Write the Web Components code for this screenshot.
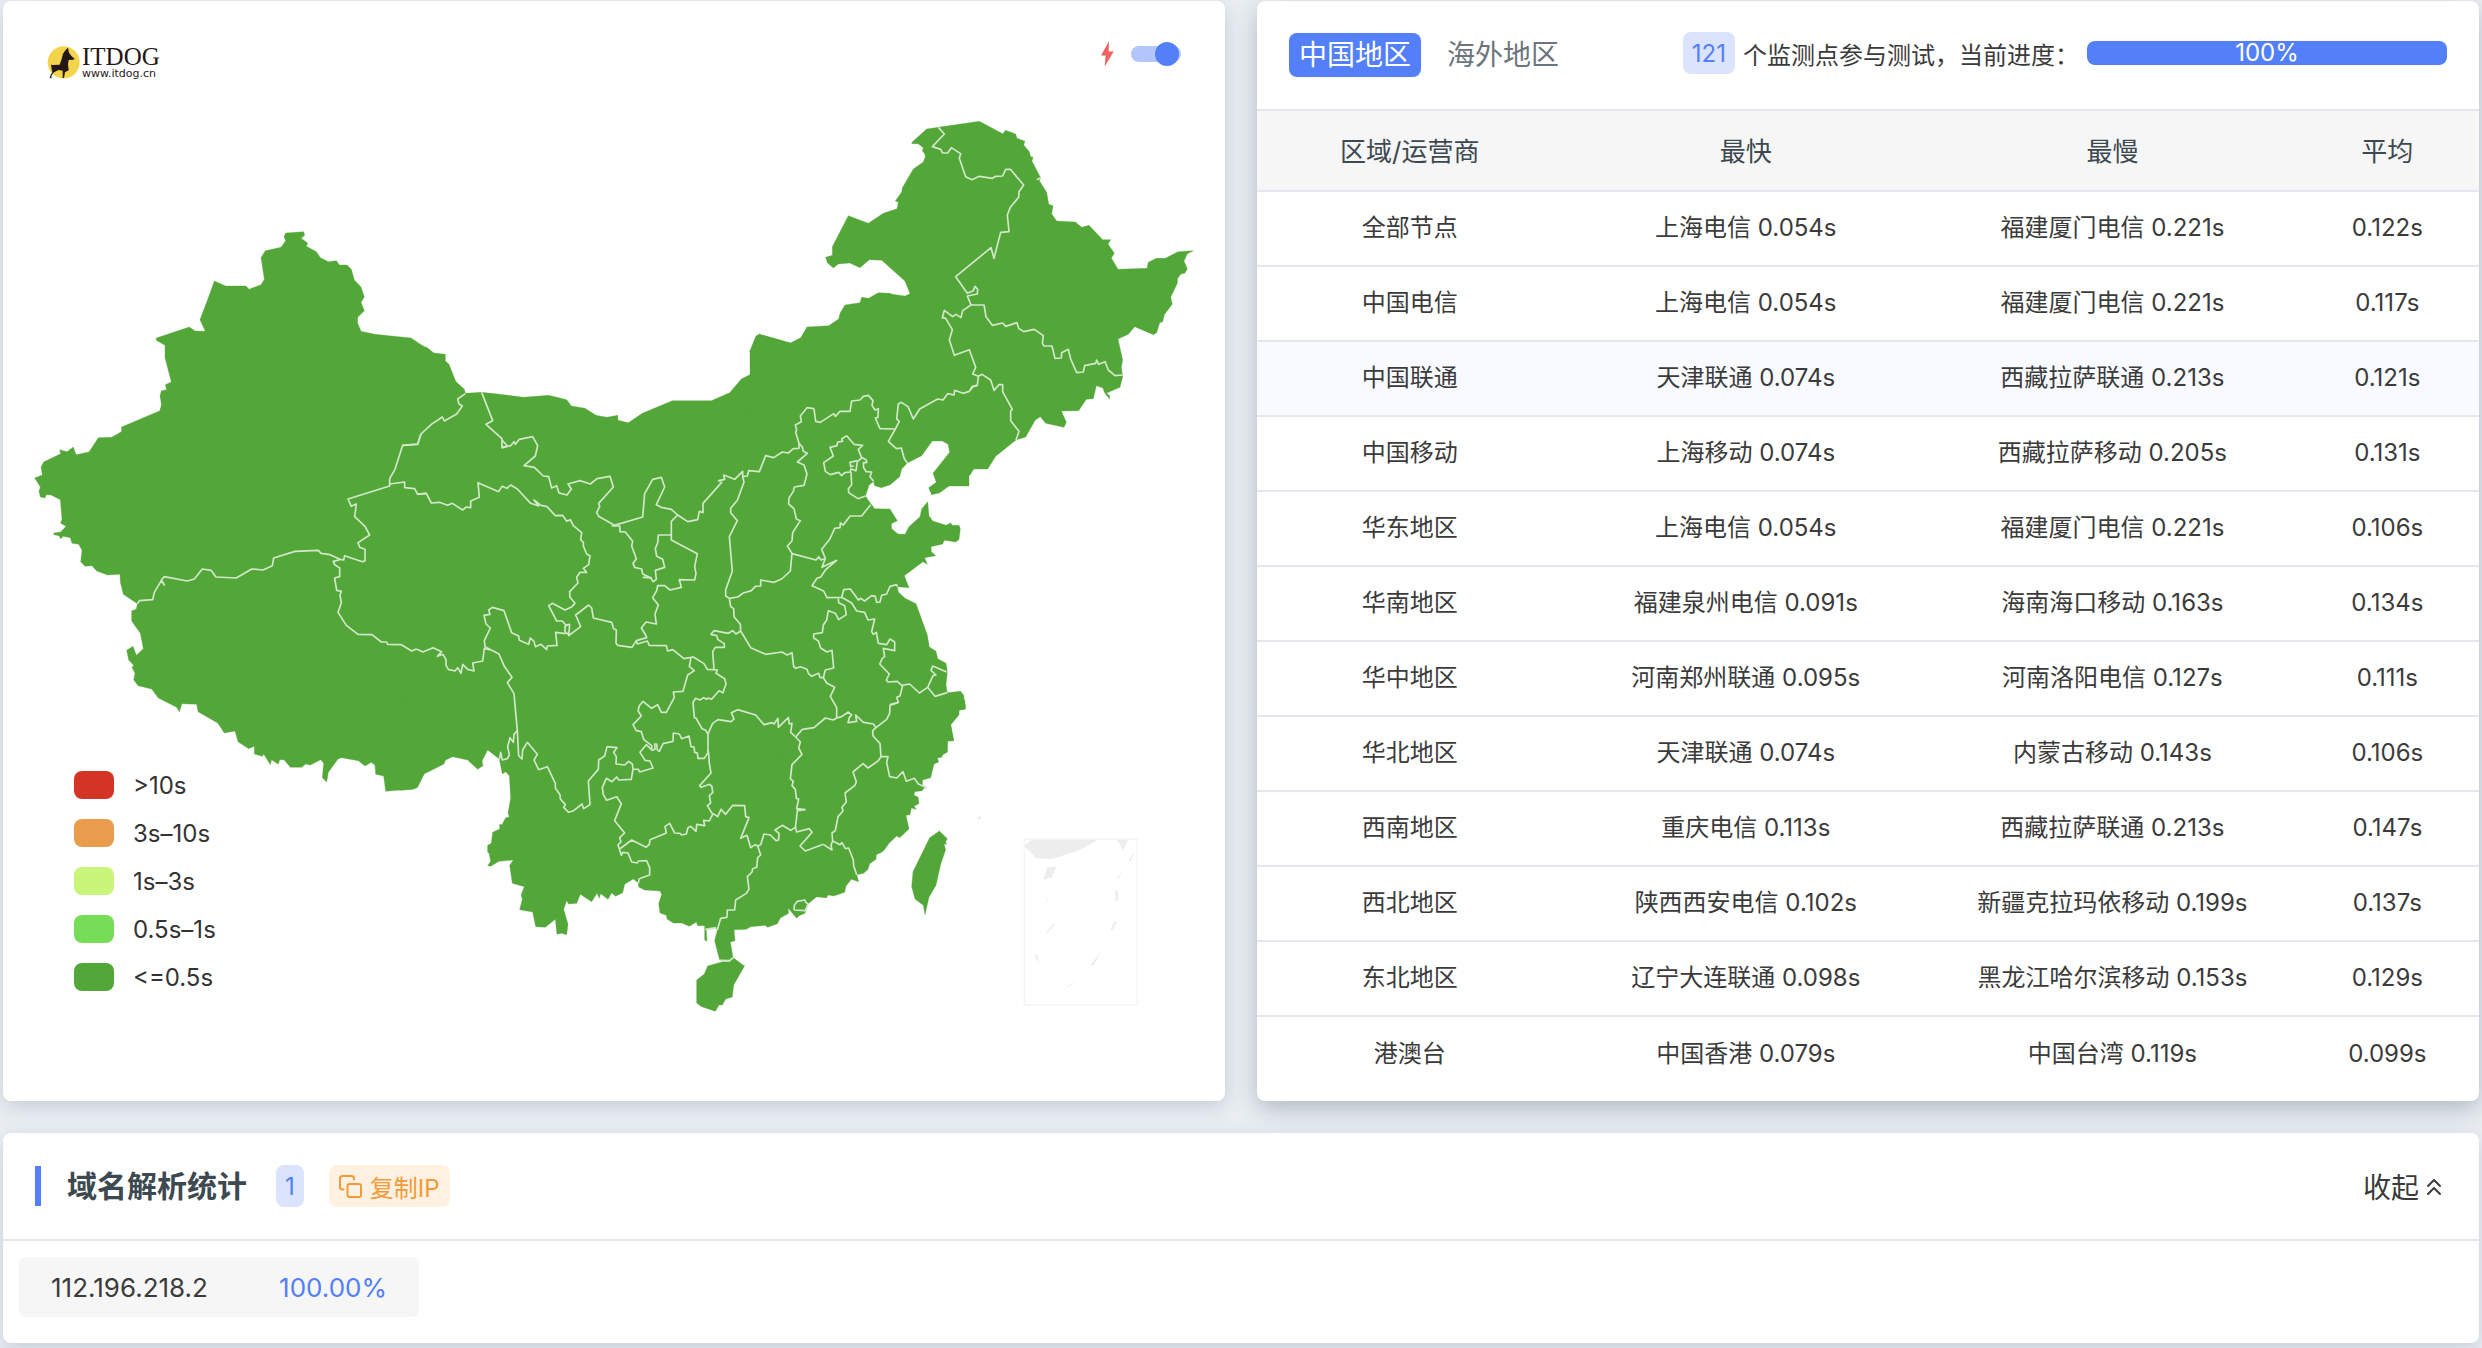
<!DOCTYPE html>
<html lang="zh-CN">
<head>
<meta charset="utf-8">
<title>ITDOG</title>
<style>
  html { background: #ebeff4; }
  body { margin: 0; font-family: Inter, "Noto Sans CJK SC", sans-serif; font-size: 24px; color: #3b3b3b; }
</style>
</head>
<body>
<speed-page></speed-page>
<script>
/* Each layer: origin x, origin y, then point lists on a grid of 1/3 px. */
const LAND = [
  [0, 0, "1290,1400 500,1400 480,1232 485,1215 480,1188 484,1172 500,1169 496,1154 514,1146 495,1073 495,1036 469,1021 469,1014 568,981 585,993 616,994 600,959 625,893 643,843 677,858 738,858 747,868 783,854 793,838 783,773 796,752 843,742 857,722 852,710 857,699 911,695 914,706 903,715 923,729 919,739 949,755 961,773 985,785 1009,782 1018,795 1041,795 1054,808 1063,840 1083,861 1093,891 1083,907 1093,932 1073,952 1073,970 1083,994 1125,1003 1233,1014 1260,1032 1290,1050"],
  [0, 1200, "484,0 485,15 480,32 365,81 364,95 335,112 295,113 267,156 228,164 220,141 201,155 179,149 182,161 131,186 123,201 127,225 104,234 121,261 117,274 121,291 135,294 139,284 153,285 181,299 186,357 182,370 198,379 182,396 161,399 162,404 177,407 182,416 190,409 211,413 216,430 236,433 246,451 242,485 255,499 276,497 290,513 323,525 360,523 361,547 370,583 412,611 409,628 395,632 395,663 421,700 430,746 409,766 399,739 380,751 386,780 401,796 396,802 405,820 401,839 414,857 455,867 475,894 530,922 538,935 546,911 590,913 594,935 653,969 673,999 705,993 714,1025 746,1046 763,1039 763,1062 787,1069 791,1062 811,1094 815,1079 835,1093 839,1079 852,1079 871,1102 905,1102 917,1092 931,1095 962,1079 971,1090 967,1133 980,1146 985,1117 1014,1077 1025,1073 1075,1082 1095,1098 1114,1087 1125,1096 1127,1123 1151,1128 1157,1174 1240,1167 1252,1162 1272,1122 1290,1000 1290,0"],
  [1200, 1050, "0,0 80,-8 90,0 102,9 136,13 136,33 147,43 167,94 193,118 196,130 245,127 300,133 370,142 446,136 500,149 514,168 555,175 588,196 620,202 653,196 654,211 685,218 727,190 817,152 934,152 989,128 1024,87 1079,59 1078,46 1049,5 1068,-41 1078,-47 1171,-21 1300,100 1300,1260 340,1150 0,1100"],
  [1200, 2100, "0,0 0,271 38,268 52,262 72,222 132,192 136,181 158,170 203,180 233,208 249,197 246,183 263,150 298,177 307,222 317,215 328,227 332,295 324,340 328,351 317,353 306,374 299,373 299,387 278,397 274,430 263,436 263,457 267,459 272,484 263,497 272,499 297,484 340,480 329,496 337,550 373,560 363,585 367,597 359,629 398,636 407,680 436,682 466,658 471,703 485,700 500,704 504,673 491,628 500,602 506,612 530,610 541,583 575,605 591,580 598,595 602,581 624,598 635,579 647,589 668,578 674,553 700,537 715,549 716,561 734,570 780,573 785,583 776,611 780,639 799,646 801,657 820,669 845,669 868,679 889,666 893,677 914,677 914,720 921,724 919,689 948,683 952,690 944,723 959,780 989,782 999,772 991,726 1005,722 1002,689 1039,688 1052,680 1095,676 1103,682 1132,671 1141,654 1166,640 1164,624 1171,632 1190,655 1197,647 1215,640 1224,612 1250,590 1280,592 1284,585 1300,585 1320,580 1320,0", "1001,774 1030,796 1034,797 1001,855 997,891 977,897 967,915 957,915 946,934 905,920 890,909 890,840 913,822 923,798 968,785 989,785"],
  [2040, 2100, "300,0 300,590 411,590 439,593 444,584 461,588 494,577 498,558 514,538 536,545 530,524 551,520 564,508 569,491 588,478 589,464 605,457 613,450 627,430 650,408 659,413 687,387 678,346 690,344 694,324 709,328 702,318 717,311 714,291 702,286 704,275 727,272 732,264 740,263 727,255 728,240 752,233 762,192 776,186 772,174 785,172 789,163 801,157 803,123 821,122 812,74 837,44 837,30 857,27 854,0", "749,413 778,393 802,416 797,425 799,433 792,432 797,449 782,493 768,556 747,592 735,644 730,616 705,597 695,560 699,515"],
  [2100, 1140, "948,50 948,180 887,229 863,267 822,267 807,289 807,318 747,318 718,339 695,344 686,323 709,307 699,280 749,217 744,193 727,183 697,183 665,227 622,249 605,267 599,290 571,314 544,323 524,317 520,305 508,314 496,348 513,372 524,386 570,387 592,422 574,431 575,446 594,462 615,463 627,440 660,410 665,387 683,365 687,407 698,423 738,436 752,429 757,436 777,436 781,446 777,478 768,486 733,481 728,492 693,500 694,515 707,527 674,533 682,553 669,545 613,587 627,623 592,620 595,636 615,655 648,671 682,765 688,801 708,814 713,836 738,850 742,875 738,915 742,938 782,934 791,946 796,987 777,991 776,1004 752,1034 761,1082 742,1083 742,1116 729,1123 0,1140 0,200 200,50"],
  [2340, 240, "-90,815 -72,769 -62,763 31,789 62,773 81,741 146,737 176,717 180,700 195,675 240,668 245,652 266,655 295,638 330,640 337,643 375,648 390,641 375,603 305,541 268,539 240,563 209,549 175,552 160,564 142,548 137,532 157,526 157,500 205,407 265,430 310,400 351,386 355,367 346,363 365,336 367,323 400,267 430,246 436,230 434,221 427,213 430,203 414,191 395,191 397,186 440,147 475,142 598,124 668,161 677,151 707,162 711,175 735,184 731,195 748,215 752,230 759,231 756,244 782,293 778,302 800,337 806,373 819,377 815,402 830,423 886,426 905,442 927,436 968,479 992,479 984,492 1003,520 994,534 1014,568 1101,565 1105,547 1129,535 1156,535 1194,515 1240,512 1222,521 1212,543 1222,567 1214,580 1203,582 1193,595 1192,610 1172,652 1177,672 1153,704 1148,725 1139,728 1130,758 1120,764 1064,740 1045,763 1014,777 1028,840 1024,862 1028,890 1020,922 980,939 989,947 989,958 973,937 969,924 949,917 940,956 919,958 896,992 844,993 859,1027 852,1042 797,1030 781,1010 766,1020 737,1071 708,1080 500,1000 0,1100 -90,1000"]
];
const BORDERS = [
  [0, 1200,
   "412,611 418,602 458,599 463,577 484,542 493,555 484,540 493,530 562,543 583,537 607,507 633,511 648,531 709,534 755,507 789,510 817,497 821,474 885,454 955,451 963,460 990,464 1024,479 1031,480 1034,467 1087,485 1095,483 1095,448 1079,442 1074,428 1109,405 1095,379 1064,350 1069,312 1054,319 1044,297 1169,258 1169,236 1185,208 1208,136 1253,132 1263,102",
   "1169,252 1214,246 1214,263 1244,266 1253,283 1279,280",
   "1020,479 1000,484 1004,494 1019,504 1019,530 1004,534 1010,571 1024,574 1020,585 1024,609 1014,637 1039,676 1074,703 1116,704 1144,726 1160,726 1163,733 1204,734 1235,753 1249,747"],
  [1200, 1050,
   "8,286 53,283 63,252 94,223 127,201 133,213 170,192 187,168 177,162 173,147 196,131",
   "53,432 79,430 94,459 118,457 143,466 157,460 188,480 199,471 212,473 212,453 238,442 234,398 296,425 306,409 321,415 332,405 352,417 392,460 416,468 402,450 423,466 441,470 466,497 488,496 500,514 511,509 520,527 545,548 542,569 550,577 550,588 560,612 570,617 566,644 550,655 560,667 540,667 530,682 534,699 509,725 510,742 525,760 516,770 495,780 457,760 446,767 470,813 487,813 497,825 509,823 506,857 542,830 527,795 566,765 575,774 580,804 635,817 641,836 649,840 648,880 653,886 696,892 709,872 740,863 737,855 724,834 738,816 769,822 765,792 775,765 758,743 770,722 773,707 794,707 810,720 844,712 838,689 884,690 888,670 884,650 892,611 814,570 814,555 775,555 773,579 766,595 770,619 788,628 794,652 766,661 769,688 760,695 750,682 730,682 754,684 728,672 725,657 704,652 699,640 709,627 695,587 698,574 676,546 660,545 659,528 635,528",
   "245,127 278,212 258,223 306,266 306,293 332,287 342,275 346,283 358,268 398,260 413,287 406,318 372,347 403,352 430,378 446,380 455,414 470,407 477,429 501,435 514,417 504,402 540,392 571,402 591,386 630,379 640,411 596,460 599,470 590,487 596,499 643,526 728,501 734,431 758,388 784,382 794,411 769,464 784,472 814,478 833,495 863,515 893,509 898,484 909,488 909,460 965,397 956,392 974,388 971,375 1004,388 1028,364 1028,380 1042,378 1046,362 1078,365 1097,317 1121,323 1147,306 1165,309 1180,296 1197,295 1197,280",
   "833,495 814,514 814,555", "306,270 322,288 306,293",
   "1028,380 1032,396 1012,451 992,475 992,488 1012,512 988,560 997,663 977,720 977,738 988,745 992,770 1001,776 1002,800 1021,823 1022,843 1052,893 1097,913 1146,906 1161,915 1176,908 1181,950 1190,956",
   "988,745 1013,741 1030,729 1054,722 1066,709 1082,708 1082,690 1122,697 1145,687 1171,663 1176,610 1162,588 1176,573 1178,548 1201,512 1189,507 1182,476 1166,462 1167,444 1180,424 1183,411 1212,406 1221,372 1212,345 1192,336 1222,310 1210,304 1207,291 1197,280 1187,247 1190,239 1186,225 1204,215 1201,198 1221,173 1242,176",
   "1022,843 1008,852 998,842 985,850 942,842 933,853 950,857 954,869 973,881 973,892 946,892 938,905 942,957",
   "709,872 712,882 742,873 748,886 799,887 803,903 818,899 852,926 880,921 912,941 922,958 952,960 948,970 974,986 978,1001 969,1028 957,1022 935,1048 925,1044 920,1048 911,1043 899,1050 887,1045 879,1057 883,1103 888,1104 906,1136 916,1140 924,1152",
   "755,1198 755,1187 731,1168 724,1145 709,1142 699,1124 724,1098 714,1082 718,1067 729,1054 755,1075 773,1064 784,1087 799,1087 823,1042 820,1026 849,1024 863,975 883,962 868,949 873,922",
   "497,851 467,847 471,886 442,888 440,899 423,883 406,890 402,874 391,864 386,883 358,871 356,858 335,848 312,782 277,772 266,780 270,793 252,796 258,822 271,834 253,872 255,890 297,912 313,949 336,982 322,998 342,1031 352,1142 356,1218",
   "509,857 495,845 495,830 504,823",
   "49,897 69,906 99,893 125,905 112,919 129,913 138,929 138,946 145,958 165,963 173,953 183,970 188,943 203,958 222,963 218,939 248,933 253,895 270,900",
   "352,1142 342,1153 340,1177 330,1163 323,1190 328,1215 322,1226 307,1230 302,1207 298,1228",
   "924,1152 938,1120 954,1109 993,1115 1002,1107 994,1088 1013,1079 1067,1095 1092,1124 1116,1118 1122,1122 1134,1105 1135,1132 1165,1103 1168,1122 1176,1120 1172,1147 1187,1161"],
  [1200, 2100,
   "356,168 366,177 368,150 382,127 412,163 402,180 416,209 442,200 466,250 466,264 480,284 481,297 496,314 491,322 506,337 521,332 546,312 551,326 570,314 565,243 595,208 596,180 614,168 621,140 651,143 641,157 649,170 648,192 674,195 686,184 697,192 699,207 715,208 719,216 759,204 750,183 735,181 720,157 739,134 757,151 765,148 764,132 770,132 772,150 778,154 789,131 819,124 820,99 838,102 845,116 867,108 873,140 882,141 884,157 892,159 894,175 913,175 924,158 924,102",
   "699,207 694,238 656,240 650,231 636,245 619,235 607,263 610,284 620,301 650,290 664,311 644,362 674,399 659,413 663,425 654,435 664,466 668,457 684,459 695,486 712,489 715,483 740,482 749,503 749,525 718,536 715,549",
   "659,447 695,420 738,442 748,433 750,419 799,399 795,379 809,370 824,399 840,400 845,405 859,402 864,383 872,379 888,394 890,373 914,377 911,361 928,363 938,343 922,317 932,309 928,287 938,278 936,260 929,253 903,262 899,257 933,219 928,190 926,160 924,152",
   "938,340 953,350 963,328 977,343 998,316 1034,317 1037,350 1047,353 1022,415 1041,406 1052,443 1066,434 1073,438 1082,434 1092,402 1111,405 1128,422 1136,420 1137,400 1125,390 1147,376 1172,391 1186,382 1190,396 1228,386 1236,397 1200,438 1216,453 1270,433",
   "1073,438 1082,465 1073,473 1070,502 1058,506 1056,516 1042,530 1047,567 1039,580 1007,600 1004,630 982,630 981,652 962,655 952,690",
   "1187,111 1201,126 1196,144 1206,163 1176,194 1171,236 1180,244 1176,257 1186,268 1189,295 1196,297 1190,326 1215,329 1192,332 1186,385",
   "959,781 989,782 999,773", "916,688 948,683",
   "1182,630 1183,616 1192,604 1215,600 1217,607 1224,612 1216,632 1182,630"],
  [2040, 2100,
   "347,111 367,88 402,83 436,54 460,60 470,54 485,50 505,36 515,45 508,53 504,68 530,64 527,45 550,67 580,72 588,83 578,92 579,108 600,130 603,170 594,183 564,204 549,191 519,216 529,245 525,256 495,279 499,306 486,322 489,333 474,350 466,392 456,399 458,423 453,435 456,450 430,433",
   "458,423 480,434 486,428 496,446 506,444 520,480 521,497 530,524",
   "588,83 620,58 629,40 630,16 654,8",
   "603,170 624,170 620,188 629,230 650,234 669,215 679,244 703,235 715,252 740,263"],
  [2100, 1140,
   "342,86 347,124 361,127 401,101 406,109 420,94 450,94 455,63 480,60 490,49 505,46 519,62 516,76 525,90 535,86 534,112 526,114 540,146 586,147 598,124 590,117 595,72 604,67 624,80 640,117 659,87 713,57 729,60 743,41 762,45 764,31 789,40 808,34 819,20 832,17",
   "586,147 565,184 589,206 604,204 613,236 622,249",
   "440,167 425,177 428,184 413,186 411,197 390,202 400,228 371,248 376,274 391,284 416,277 425,287 434,278 450,276 453,267 468,272 472,245 485,234 475,208 488,196 462,193 440,167",
   "485,232 499,240 500,248 490,248 491,263 499,275 515,276 510,290 521,304",
   "472,242 450,247 452,260 461,257",
   "453,276 455,314 445,326 446,338 474,356 496,348",
   "512,374 485,408 450,408 430,435 421,429 420,443 404,445 389,478 365,508 376,535 366,562 410,541 378,568 362,591 351,595 336,617 371,633 381,653 425,652 431,629 451,627 475,660 481,655 494,663 515,647 526,649 530,667 540,666 545,646 560,642 570,619 590,614 592,620",
   "276,521 348,540 356,530 363,540 374,536",
   "415,655 416,668 434,677 439,704 416,719 406,700 385,692 380,720 370,735 367,758 341,762 341,774 355,783 362,804 381,816 396,811 401,864 376,870 370,893 360,892 356,880 335,889 325,880 321,868 301,860 288,865 281,860",
   "370,893 380,909 404,922 391,949 410,983 410,1014",
   "425,652 455,669 470,693 494,697 504,720 524,717 515,755 520,763 529,757 535,790 560,794 570,777 584,786 584,812 550,805 554,830 547,835 539,852 568,882 559,900 564,906 592,904 605,916 629,912 658,939 683,922 699,887 708,885 693,871 698,858 740,876",
   "683,922 705,949 742,938", "608,916 600,948 590,952 595,967 570,974"],
  [2340, 240,
   "475,142 493,162 457,200 482,208 488,219 503,219 514,203 542,221 538,235 557,290 576,299 598,289 637,295 647,289 668,288 677,268 691,268 731,315 717,335 716,352 691,382 682,405 687,455 662,457 642,535 633,503 527,590 562,640 580,632 585,619 593,628 592,642 562,648 573,675 548,692 543,713 528,703 518,710 493,691 487,713 497,715 517,749 508,779 523,826 568,809 587,862 578,882 595,889 592,915 576,920 570,930",
   "573,675 612,675 618,710 637,736 668,729 677,739 711,728 716,745 731,755 763,748 790,767 787,790 792,798 816,798 825,835 844,834 845,818 865,808 872,837 890,878 910,876 914,857 947,850 950,840 956,853 975,845 985,870 1005,887 1028,885",
   "595,889 606,883 632,900 642,931 657,914 668,914 668,935 697,988 692,993 692,1022 717,1054 708,1080",
   "770,299 782,293"]
];
const SEA = [
  "1033,438 1057,418 1256,418 1195,452 1113,478 1068,474", "1310,418 1345,418 1330,452",
  "1101,503 1130,499 1115,532 1090,539", "1366,452 1352,484 1345,482", "1328,511 1316,536 1311,536",
  "1306,571 1314,571 1314,603 1306,603", "1312,663 1299,690 1290,692 1302,665", "1265,752 1241,795 1231,795",
  "1190,846 1168,859 1155,860", "1062,764 1072,764 1077,792", "1125,673 1100,701 1096,701 1115,675",
  "1096,589 1101,595 1109,623", "890,358 900,347 903,347 903,358"
];

function define(name, html, setup) {
  customElements.define(name, class extends HTMLElement {
    connectedCallback() {
      if (this.shadowRoot) return;
      const root = this.attachShadow({ mode: "open" });
      root.innerHTML = html;
      if (setup) setup(root, this);
    }
  });
}

define("speed-card", `<style>
  :host { display: block; min-width: 0; background: #fff; border-radius: 8px; box-shadow: 0 6px 20px rgba(88,108,124,.26); }
  :host([raised]) { box-shadow: 0 8px 24px rgba(72,92,106,.36); }
</style><slot></slot>`);

define("count-badge", `<style>
  :host { display: inline-flex; align-items: center; height: 42px; padding: 0 9px; border-radius: 8px; background: #dce4fd; color: #537ff8; font-size: 24px; }
</style><slot></slot>`);

define("site-logo", `<style>
  :host { display: flex; align-items: center; gap: 2px; color: #231815; }
  svg { width: 33px; height: 33px; }
  div { display: flex; flex-direction: column; padding-top: 4px; }
  strong { font: 400 25px/20px "Liberation Serif", serif; }
  small { font: 11px/14px "DejaVu Sans", sans-serif; }
</style>
<svg viewBox="141 135 97 99" aria-hidden="true"><circle cx="190" cy="184" r="48" fill="#f4d44a"/><path fill="#231815" d="M203 140L206 155L214 166L223 173L219 176L205 177L203 190L205 208L194 214L191 231L187 231L187 209L174 207L159 215L153 225L154 232L148 231L151 221L156 214L154 205L152 190L155 192L178 191L184 174L188 158L196 147Z"/></svg>
<div><strong>ITDOG</strong><small>www.itdog.cn</small></div>`);

define("fast-switch", `<style>
  :host { display: block; }
  label { display: flex; align-items: center; gap: 17px; }
  svg { width: 13px; height: 26px; }
  input { appearance: none; position: relative; width: 50px; height: 24px; margin: 0; }
  input::before { content: ""; position: absolute; inset: 4px 0; border-radius: 8px; background: #b2c6fb; }
  input::after { content: ""; position: absolute; right: 2px; top: 0; width: 24px; height: 24px; border-radius: 50%; background: #537ff8; }
</style>
<label><svg viewBox="1112 26 39 77" aria-hidden="true"><path fill="#f0625d" d="M1136 26L1112 69H1126L1123 102L1150 57H1135Z"/></svg><input type="checkbox" checked aria-label="⚡"></label>`);

define("delay-legend", `<style>
  :host { display: block; }
  ul { list-style: none; margin: 0; padding: 0; display: flex; flex-direction: column; gap: 20px; }
  li { display: flex; align-items: center; gap: 19px; line-height: 28px; font-size: 24px; color: #333; }
  i { width: 40px; height: 28px; border-radius: 8px; }
  span { padding-top: 1px; line-height: 27px; }
</style><ul></ul>`, root => {
  root.querySelector("ul").innerHTML = [["#d43426", "&gt;10s"], ["#e99d4c", "3s–10s"], ["#c9f57b", "1s–3s"], ["#77dd59", "0.5s–1s"], ["#53a638", "&lt;=0.5s"]]
    .map(([c, t]) => `<li><i style="background:${c}"></i><span>${t}</span></li>`).join("");
});

define("china-map", `<style>
  :host { display: block; }
  svg { display: block; width: 100%; height: auto; }
  polygon { fill: #53a638; stroke: #53a638; stroke-width: 1; stroke-linejoin: round; }
  polyline { fill: none; stroke: #d2e8ca; stroke-width: 5; stroke-linejoin: round; }
  .sea polygon { fill: #ededed; stroke: none; }
  rect { fill: none; stroke: #f3f3f3; stroke-width: 4; }
</style><svg viewBox="9 3 3666 3300" role="img"></svg>`, root => {
  const layer = (tag, rows) => rows.map(([x, y, ...lines]) =>
    `<g transform="translate(${x} ${y})">${lines.map(p => `<${tag} points="${p}"/>`).join("")}</g>`).join("");
  root.querySelector("svg").innerHTML = layer("polygon", LAND) + layer("polyline", BORDERS) +
    `<g class="sea" transform="translate(2040 2100)">${SEA.map(p => `<polygon points="${p}"/>`).join("")}<rect x="1033" y="418" width="339" height="497"/></g>`;
});

define("map-panel", `<style>
  :host { display: grid; }
  china-map, .over { grid-area: 1 / 1; }
  .over { z-index: 1; display: flex; flex-direction: column; justify-content: space-between; padding: 40px 44px 110px; }
  header { display: flex; justify-content: space-between; align-items: flex-start; }
  site-logo { padding-top: 2px; }
  delay-legend { padding-left: 27px; }
</style>
<china-map></china-map>
<div class="over"><header><site-logo></site-logo><fast-switch></fast-switch></header><delay-legend></delay-legend></div>`);

define("progress-bar", `<style>
  :host { display: flex; justify-content: center; align-items: center; width: 360px; height: 24px; border-radius: 8px; background: #537ff8; color: #fff; font-size: 24px; line-height: 24px; }
</style><slot></slot>`);

define("region-tabs", `<style>
  :host { display: flex; gap: 16px; }
  button { border: 0; border-radius: 8px; height: 44px; padding: 0 10px; background: none; color: #6c757d; font: inherit; font-size: 28px; line-height: 44px; }
  button[aria-selected=true] { background: #537ff8; color: #fff; }
</style><button role="tab" aria-selected="true">中国地区</button><button role="tab" aria-selected="false">海外地区</button>`);

define("delay-table", `<style>
  :host { display: block; }
  table { width: 100%; border-collapse: separate; border-spacing: 0; table-layout: fixed; text-align: center; }
  th, td { box-sizing: border-box; padding: 0 0 2px; border-bottom: 2px solid #e4e8ec; }
  th { height: 81px; background: #f6f6f7; color: #3d4950; font-size: 26px; font-weight: 400; }
  td { height: 75px; font-size: 24px; line-height: 36px; }
  th:first-child { width: 25%; } th:nth-child(2), th:nth-child(3) { width: 30%; } th:nth-child(4) { width: 15%; }
  tbody tr:last-child td { border: 0; }
  .on td { background: #f8faff; }
</style>
<table><thead><tr><th>区域/运营商</th><th>最快</th><th>最慢</th><th>平均</th></tr></thead><tbody></tbody></table>`, root => {
  root.querySelector("tbody").innerHTML = `全部节点|上海电信 0.054s|福建厦门电信 0.221s|0.122s
中国电信|上海电信 0.054s|福建厦门电信 0.221s|0.117s
中国联通|天津联通 0.074s|西藏拉萨联通 0.213s|0.121s
中国移动|上海移动 0.074s|西藏拉萨移动 0.205s|0.131s
华东地区|上海电信 0.054s|福建厦门电信 0.221s|0.106s
华南地区|福建泉州电信 0.091s|海南海口移动 0.163s|0.134s
华中地区|河南郑州联通 0.095s|河南洛阳电信 0.127s|0.111s
华北地区|天津联通 0.074s|内蒙古移动 0.143s|0.106s
西南地区|重庆电信 0.113s|西藏拉萨联通 0.213s|0.147s
西北地区|陕西西安电信 0.102s|新疆克拉玛依移动 0.199s|0.137s
东北地区|辽宁大连联通 0.098s|黑龙江哈尔滨移动 0.153s|0.129s
港澳台|中国香港 0.079s|中国台湾 0.119s|0.099s`.split("\n")
    .map((r, i) => `<tr${i === 2 ? ' class="on"' : ""}>${r.split("|").map(c => `<td>${c}</td>`).join("")}</tr>`).join("");
});

define("result-panel", `<style>
  :host { display: block; }
  header { display: flex; align-items: center; justify-content: space-between; box-sizing: border-box; height: 110px; padding: 0 32px; border-bottom: 2px solid #e4e8ec; }
  .status { display: flex; align-items: center; gap: 8px; padding-bottom: 4px; }
</style>
<header><region-tabs></region-tabs><div class="status"><count-badge>121</count-badge><span>个监测点参与测试，当前进度：</span><progress-bar>100%</progress-bar></div></header>
<delay-table></delay-table>`);

define("dns-panel", `<style>
  :host { display: block; }
  header { display: flex; align-items: center; box-sizing: border-box; height: 108px; padding: 0 36px 0 32px; border-bottom: 2px solid #e4e7ed; }
  header::before { content: ""; width: 6px; height: 40px; margin-right: 26px; background: #537ff8; }
  h2 { margin: 0 29px 0 0; font-size: 30px; line-height: 40px; font-weight: 700; color: #3d4950; }
  button { display: flex; align-items: center; border: 0; background: none; color: inherit; font: inherit; }
  .copy { gap: 8px; height: 42px; margin-left: 25px; padding: 0 10px; border-radius: 8px; background: #fef1e1; color: #f29b38; }
  .copy svg { width: 23px; height: 23px; }
  .fold { gap: 6px; margin-left: auto; padding: 0; font-size: 28px; }
  .fold svg { width: 18px; height: 20px; }
  svg { fill: none; stroke: currentColor; stroke-linecap: round; stroke-linejoin: round; }
  .body { padding: 16px 16px 26px; }
  .ip { display: flex; justify-content: space-between; align-items: center; box-sizing: border-box; width: 400px; height: 60px; padding: 0 32px; border-radius: 6px; background: #f6f6f6; font-size: 26px; }
  .ip b { font-weight: 400; color: #537ff8; }
</style>
<header><h2>域名解析统计</h2><count-badge>1</count-badge>
<button class="copy"><svg viewBox="0 0 23 23" stroke-width="2" aria-hidden="true"><rect x="8.500" y="9" width="13.500" height="13" rx="2"/><path d="M4.500 14.500H3.500Q1 14.500 1 12V3.500Q1 1 3.500 1H12.500Q15 1 15 3.500V4.500"/></svg>复制IP</button>
<button class="fold">收起<svg viewBox="0 0 18 20" stroke-width="2" aria-hidden="true"><path d="M3 10L9 4L15 10M3 18L9 12L15 18"/></svg></button></header>
<div class="body"><div class="ip"><span>112.196.218.2</span><b>100.00%</b></div></div>`);

define("speed-page", `<style>
  :host { display: block; padding: 1px 3px 5px; }
  main { display: grid; grid-template-columns: 1fr 1fr; gap: 32px; }
  .wide { grid-column: 1 / -1; }
</style>
<main>
  <speed-card><map-panel></map-panel></speed-card>
  <speed-card raised><result-panel></result-panel></speed-card>
  <speed-card class="wide"><dns-panel></dns-panel></speed-card>
</main>`);
</script>
</body>
</html>
